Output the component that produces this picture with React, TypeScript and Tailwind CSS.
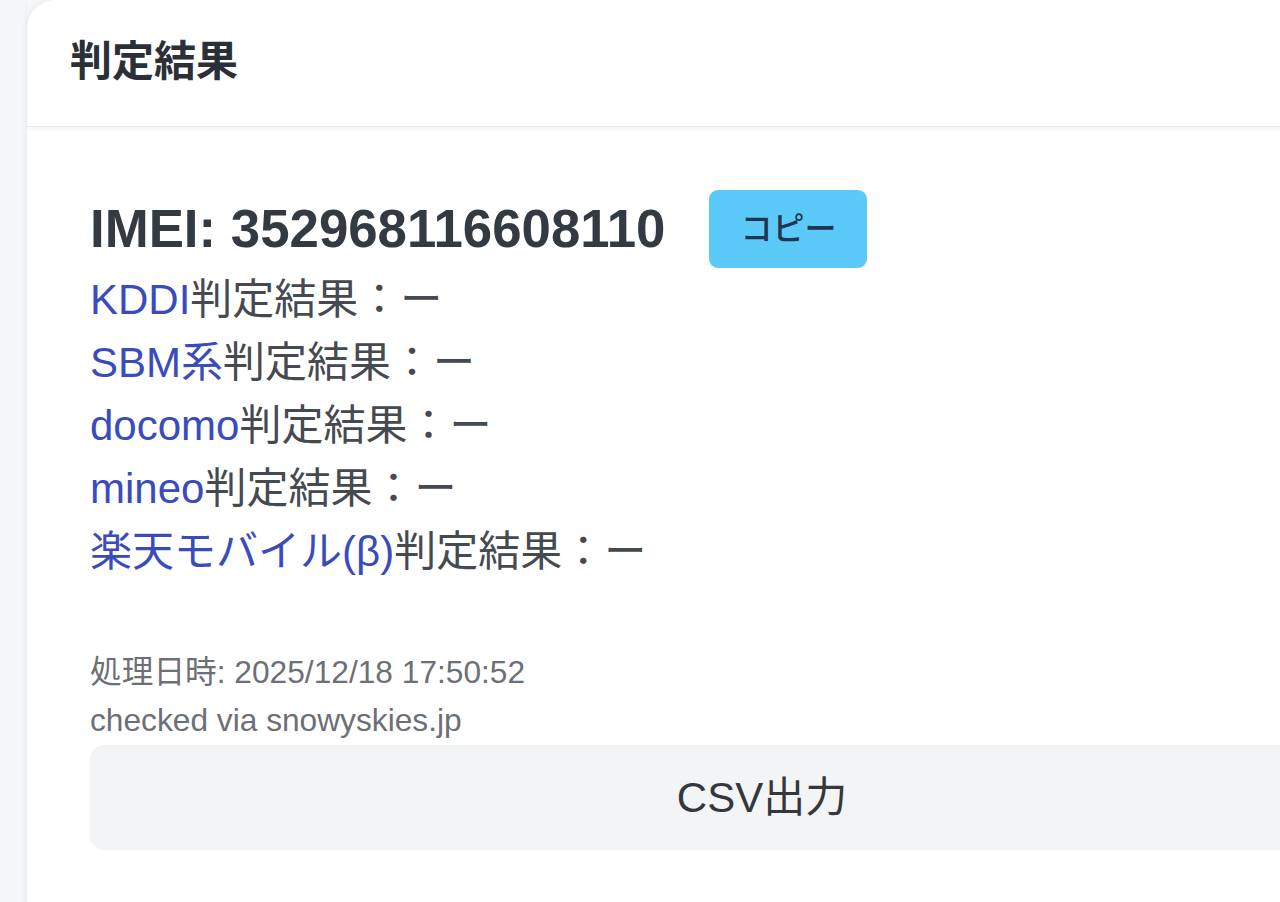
import { useState } from 'react';

const CARRIERS = ['KDDI', 'SBM系', 'docomo', 'mineo', '楽天モバイル(β)'];

const FONT = "font-['Liberation_Sans','Noto_Sans_CJK_JP',sans-serif]";

export default function App() {
  const [copied, setCopied] = useState(false);
  const imei = '352968116608110';

  return (
    <div className={`${FONT} w-[1280px] h-[902px] overflow-hidden bg-[#f6f7f8] pl-[27px]`}>
      <div className="w-[1470px] min-h-[930px] bg-white rounded-[28px] shadow-[0_0_6px_rgba(0,0,0,0.08)]">
        {/* Card header */}
        <div className="px-[43px] pt-[30px] pb-[33px] border-b border-[#e8e8ea] shadow-[0_2px_4px_rgba(0,0,0,0.05)]">
          <h2 className="text-[42px] leading-[63px] font-bold text-[#2b3038]">判定結果</h2>
        </div>

        {/* Card body */}
        <div className="px-[63px] pt-[63px]">
          <div className="flex items-center h-[78px] gap-[44px]">
            <h3 className="text-[52.8px] leading-[62px] font-bold text-[#333a42]">IMEI: {imei}</h3>
            <button
              onClick={() => setCopied(!copied)}
              className="h-[78px] px-[31px] rounded-[9px] bg-[#5ccaf8] text-[32px] font-medium text-[#1f3550]"
            >
              コピー
            </button>
          </div>

          <div className="text-[42px] leading-[63px] text-[#454a50]">
            {CARRIERS.map((name) => (
              <div key={name}>
                <span className="text-[#3a4bbd]">{name}</span>判定結果：ー
              </div>
            ))}
          </div>

          <div className="mt-[65px] text-[31.7px] leading-[48px] text-[#6c7076]">
            <div>処理日時: 2025/12/18 17:50:52</div>
            <div>checked via snowyskies.jp</div>
          </div>

          <button className="mt-px w-full h-[105px] rounded-[14px] bg-[#f3f4f6] text-[42px] text-[#34383d]">
            CSV出力
          </button>
        </div>
      </div>
    </div>
  );
}
